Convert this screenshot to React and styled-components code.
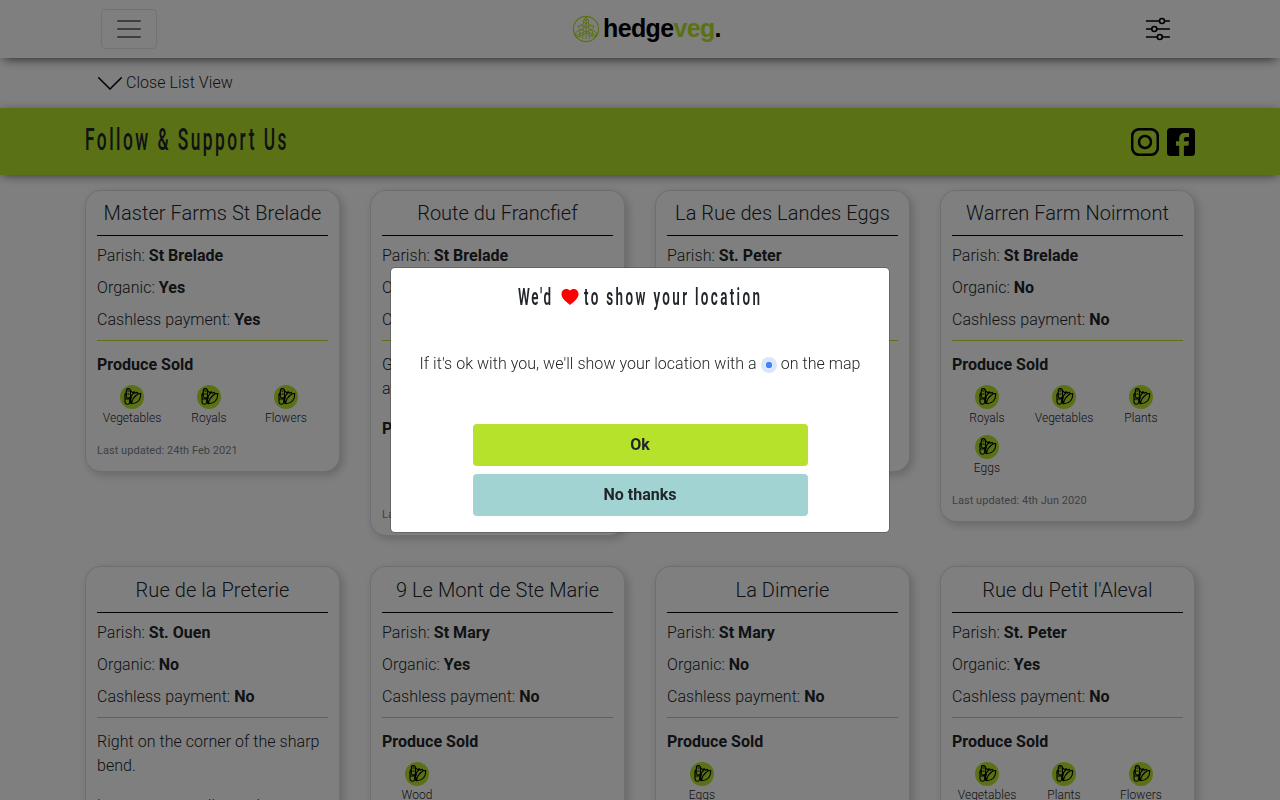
import React from "react";
import styled, { createGlobalStyle } from "styled-components";

const GlobalStyle = createGlobalStyle`
  *, *::before, *::after { box-sizing: border-box; }
  html, body { margin: 0; height: 100%; overflow: hidden; }
  body {
    background: #fff;
    color: #212529;
    font-family: Roboto, "Liberation Sans", sans-serif;
    font-size: 16px;
    font-weight: 300;
    line-height: 24px;
    letter-spacing: 0.04px;
  }
  b { font-weight: 700; letter-spacing: 0.02px; }
  svg { display: block; flex: none; }
`;

const Page = styled.div`
  height: 800px;
  overflow: hidden;
`;

const Navbar = styled.header`
  position: relative;
  z-index: 1;
  height: 58px;
  padding: 0 101px;
  display: grid;
  grid-template-columns: 1fr auto 1fr;
  align-items: center;
  background: #fff;
  box-shadow: 0 5px 10px -4px rgba(0, 0, 0, 0.7);
`;

const Toggler = styled.button`
  width: 56px;
  height: 40px;
  padding: 0;
  display: flex;
  align-items: center;
  justify-content: center;
  background: transparent;
  border: 1px solid rgba(0, 0, 0, 0.1);
  border-radius: 4px;
`;

const Brand = styled.div`
  display: flex;
  align-items: center;
  gap: 3px;
  margin-left: 13px;
  font: 700 25px/30px "Liberation Sans", Arial, sans-serif;
  letter-spacing: -0.65px;
  color: #000;
  span { color: #b7e22b; }
`;

const BrandName = styled.div`
  padding-bottom: 2px;
`;

const FilterButton = styled.div`
  justify-self: end;
  margin-right: 9px;
`;

const ListToggle = styled.div`
  height: 50px;
  padding-left: 98px;
  display: flex;
  align-items: center;
  gap: 4px;
`;

const SupportBand = styled.section`
  position: relative;
  height: 67px;
  padding: 0 85px;
  display: flex;
  align-items: center;
  justify-content: space-between;
  background: #b7e22b;
  box-shadow: 0 2px 10px -2px rgba(0, 0, 0, 0.65);
`;

const Handwritten = styled.span`
  display: inline-block;
  white-space: nowrap;
  font-weight: ${(p) => p.$weight};
  font-size: ${(p) => p.$size}px;
  line-height: 36px;
  letter-spacing: ${(p) => p.$spacing}px;
  transform: scaleX(${(p) => p.$squeeze});
  transform-origin: left center;
  width: ${(p) => p.$width}px;
`;

const BandTitle = styled.div`
  padding-bottom: 4px;
`;

const Social = styled.div`
  display: flex;
  gap: 8px;
`;

const CardGrid = styled.main`
  padding: 15px 85px 0;
  display: grid;
  grid-template-columns: repeat(4, 255px);
  gap: 30px;
  align-items: start;
`;

const Card = styled.article`
  padding: 10.4px 11px 11px;
  border: 1px solid rgba(0, 0, 0, 0.125);
  border-radius: 16px;
  background: #fff;
  box-shadow: 3px 3px 10px rgba(0, 0, 0, 0.2);
`;

const CardTitle = styled.h2`
  margin: 0 0 8px;
  padding-bottom: 10px;
  border-bottom: 1px solid #000;
  font-size: 20px;
  font-weight: 300;
  line-height: 24px;
  letter-spacing: ${(p) => (p.$ligature ? 0 : 0.05)}px;
  text-align: center;
  white-space: nowrap;
`;

const Fact = styled.p`
  margin: 0 0 8px;
`;

const Details = styled.div`
  margin-top: 8px;
  padding-top: 12px;
  border-top: 1px solid #b7e22b;
`;

const Facts = styled.div`
  ${Fact}:last-child { margin-bottom: 0; }
`;

const Description = styled.p`
  margin: 0 0 16px;
`;

const ProduceList = styled.ul`
  list-style: none;
  margin: 0;
  padding: 0;
  display: flex;
  flex-wrap: wrap;
`;

const Produce = styled.li`
  width: 70px;
  margin: 8px 7px 0 0;
  display: flex;
  flex-direction: column;
  align-items: center;
  font-size: 12px;
  line-height: 18px;
`;

const Updated = styled.p`
  margin: 15px 0 0;
  font-size: 11px;
  font-weight: 400;
  line-height: 18px;
  color: #7a828a;
`;

const Backdrop = styled.div`
  position: fixed;
  inset: 0;
  z-index: 10;
  display: flex;
  align-items: center;
  justify-content: center;
  background: rgba(0, 0, 0, 0.5);
`;

const Dialog = styled.div`
  width: 500px;
  height: 266px;
  padding: 11px 0 0;
  display: flex;
  flex-direction: column;
  align-items: center;
  background: #fff;
  background-clip: padding-box;
  border: 1px solid rgba(0, 0, 0, 0.2);
  border-radius: 5px;
`;

const DialogTitle = styled.h1`
  margin: 0;
  height: 36px;
  display: flex;
  align-items: center;
  gap: 5px;
  font-size: 16px;
`;

const DialogText = styled.p`
  margin: 37px 0 48px;
  display: flex;
  align-items: center;
  gap: 4px;
  svg { margin-top: 2px; }
`;

const Choice = styled.button`
  width: 335px;
  height: 42px;
  margin: 0 0 8px 1px;
  padding: 0 1px 0 0;
  border: 0;
  border-radius: 4px;
  background: ${(p) => p.$tone};
  color: #212529;
  font: 700 16px/24px Roboto, sans-serif;
`;

const MenuIcon = () => (
  <svg width="30" height="30" viewBox="0 0 30 30" stroke="#000" strokeOpacity=".5" strokeWidth="2" strokeLinecap="round">
    <path d="M4 7h22M4 15h22M4 23h22" />
  </svg>
);

const LeafMark = () => (
  <svg width="28" height="28" viewBox="0 0 28 28" fill="none" stroke="#b7e22b" strokeWidth="1">
    <circle cx="14" cy="14" r="12.6" strokeWidth="1.2" />
    <path d="M14 2v22M14 2c-4 4-3 8 0 11 3-3 4-7 0-11M14 16 3 21M14 16l11 5M3 21c1-6 5-7 9-5-1 5-5 7-9 5M25 21c-1-6-5-7-9-5 1 5 5 7 9 5M14 13l-5-4M14 13l5-4M6 11c3-1 5 0 6 3-3 1-5 0-6-3M22 11c-3-1-5 0-6 3 3 1 5 0 6-3M11 24c-1-3 0-5 3-6 3 1 4 3 3 6M14 6l2-2M14 9l3-3M14 6l-2-2M14 9l-3-3M8 19l-1-3M8 19l0 3M20 19l1-3M20 19v3" />
  </svg>
);

const SlidersIcon = () => (
  <svg width="24" height="24" viewBox="0 0 24 24" fill="none" stroke="#000" strokeWidth="1.6">
    <path d="M0 4h13.5M18.500 4H24M0 12h5.800M10.800 12H24M0 20h11.300M16.300 20H24" />
    <circle cx="16" cy="4" r="2.500" />
    <circle cx="8.300" cy="12" r="2.500" />
    <circle cx="13.800" cy="20" r="2.500" />
  </svg>
);

const ChevronIcon = () => (
  <svg width="24" height="14" viewBox="0 0 24 14" fill="none" stroke="#000" strokeWidth="1.5" strokeLinecap="round">
    <path d="M.7 1.700 12 13 23.300 1.700" />
  </svg>
);

const InstagramIcon = () => (
  <svg width="28" height="28" viewBox="0 0 28 28" fill="none" stroke="#000">
    <rect x="1.200" y="1.200" width="25.600" height="25.600" rx="7" strokeWidth="2.500" />
    <circle cx="14" cy="14" r="6" strokeWidth="2.500" />
    <circle cx="21.500" cy="6.500" r="1" fill="#ddd" stroke="none" />
  </svg>
);

const FacebookIcon = () => (
  <svg width="28" height="28" viewBox="0 0 28 28">
    <rect width="28" height="28" rx="3.500" />
    <path fill="#b7e22b" d="M12.200 28V17.800H9v-4.600h3.200v-2.400c0-3.800 2-5.800 5.600-5.800H22v4h-2.600c-1.900 0-2.500.8-2.500 2.400v1.800H22l-.6 4.600h-4.500V28z" />
  </svg>
);

const VegIcon = () => (
  <svg width="24" height="24" viewBox="0 0 24 24" fill="none" stroke="#000" strokeWidth="1.100" strokeLinejoin="round" strokeLinecap="round">
    <circle cx="12" cy="12" r="12" fill="#b7e22b" stroke="none" />
    <path d="M6.300 11.500V6.200C6.300 2.800 10.300 2.800 10.500 6v5.500c-.3 2-3.800 2-4.200 0M6.300 7.500C4.600 9 4.600 11 5 12.500v4.500c.3 3 4 3 4.700.3v-4M5 14h3.500M7.800 6h1.200M7.800 9h1.200M10.500 5.500l2 2.200 1.600-1 1.300 1.500 1.800-1 1 1.600 2.600-.3c0 5.800-3 10-9.300 10.300-1.600-3.300-1.200-8 2.600-11M11.500 18.800c.2-4 3-7.500 6.700-10M11.500 18.800c-1-.3-1.500-.8-1.800-1.500M10.500 12l1 1" />
  </svg>
);

const HeartIcon = () => (
  <svg width="18" height="18" viewBox="0 0 18 18">
    <path fill="red" d="M9 17C6.500 14.300.5 11 .5 6.200.5.800 6.500-.3 9 2.600c2.500-2.900 8.500-1.800 8.500 3.600C17.500 11 11.500 14.300 9 17z" />
  </svg>
);

const LocationDot = () => (
  <svg width="16" height="16" viewBox="0 0 16 16">
    <circle cx="8" cy="8" r="8" fill="#d9e6fd" />
    <circle cx="8" cy="8" r="4" fill="#f1f6ff" />
    <circle cx="8" cy="8" r="3.200" fill="#4285f4" />
  </svg>
);

const stalls = [
  { name: "Master Farms St Brelade", parish: "St Brelade", organic: "Yes", cashless: "Yes", notes: [], produce: ["Vegetables", "Royals", "Flowers"], updated: "24th Feb 2021" },
  { name: "Route du Francfief", parish: "St Brelade", organic: "No", cashless: "No", notes: ["Granite wall beside the lane and at the gate"], produce: ["Eggs"], updated: "4th Jun 2020" },
  { name: "La Rue des Landes Eggs", parish: "St. Peter", organic: "No", cashless: "No", notes: [], produce: ["Eggs"], updated: "4th Jun 2020" },
  { name: "Warren Farm Noirmont", parish: "St Brelade", organic: "No", cashless: "No", notes: [], produce: ["Royals", "Vegetables", "Plants", "Eggs"], updated: "4th Jun 2020" },
  { name: "Rue de la Preterie", parish: "St. Ouen", organic: "No", cashless: "No", notes: ["Right on the corner of the sharp bend.", "long verge, small round"], produce: [], updated: "4th Jun 2020" },
  { name: "9 Le Mont de Ste Marie", parish: "St Mary", organic: "Yes", cashless: "No", notes: [], produce: ["Wood"], updated: "4th Jun 2020" },
  { name: "La Dimerie", parish: "St Mary", organic: "No", cashless: "No", notes: [], produce: ["Eggs"], updated: "4th Jun 2020" },
  { name: "Rue du Petit l'Aleval", parish: "St. Peter", organic: "Yes", cashless: "No", notes: [], produce: ["Vegetables", "Plants", "Flowers"], updated: "4th Jun 2020" },
];

const StallCard = ({ stall }) => (
  <Card>
    <CardTitle $ligature={stall.name.includes("fi")}>{stall.name}</CardTitle>
    <Facts>
      <Fact>Parish: <b>{stall.parish}</b></Fact>
      <Fact>Organic: <b>{stall.organic}</b></Fact>
      <Fact>Cashless payment: <b>{stall.cashless}</b></Fact>
    </Facts>
    <Details>
      {stall.notes.map((note) => <Description key={note}>{note}</Description>)}
      {stall.produce.length > 0 && (
        <>
          <b>Produce Sold</b>
          <ProduceList>
            {stall.produce.map((item) => (
              <Produce key={item}><VegIcon />{item}</Produce>
            ))}
          </ProduceList>
          <Updated>Last updated: {stall.updated}</Updated>
        </>
      )}
    </Details>
  </Card>
);

export default function App() {
  return (
    <Page>
      <GlobalStyle />
      <Navbar>
        <Toggler aria-label="Menu"><MenuIcon /></Toggler>
        <Brand><LeafMark /><BrandName>hedge<span>veg</span>.</BrandName></Brand>
        <FilterButton><SlidersIcon /></FilterButton>
      </Navbar>
      <ListToggle><ChevronIcon />Close List View</ListToggle>
      <SupportBand>
        <BandTitle>
          <Handwritten $size={31} $weight={500} $spacing={4.4} $squeeze={0.56} $width={203}>Follow &amp; Support Us</Handwritten>
        </BandTitle>
        <Social><InstagramIcon /><FacebookIcon /></Social>
      </SupportBand>
      <CardGrid>
        {stalls.map((stall) => <StallCard key={stall.name} stall={stall} />)}
      </CardGrid>
      <Backdrop>
        <Dialog role="dialog">
          <DialogTitle>
            <Handwritten $size={24} $weight={600} $spacing={3} $squeeze={0.56} $width={38}>We'd</Handwritten>
            <HeartIcon />
            <Handwritten $size={24} $weight={600} $spacing={4.2} $squeeze={0.56} $width={179}>to show your location</Handwritten>
          </DialogTitle>
          <DialogText>If it's ok with you, we'll show your location with a <LocationDot /> on the map</DialogText>
          <Choice $tone="#b7e22b">Ok</Choice>
          <Choice $tone="#a1d3d2">No thanks</Choice>
        </Dialog>
      </Backdrop>
    </Page>
  );
}
